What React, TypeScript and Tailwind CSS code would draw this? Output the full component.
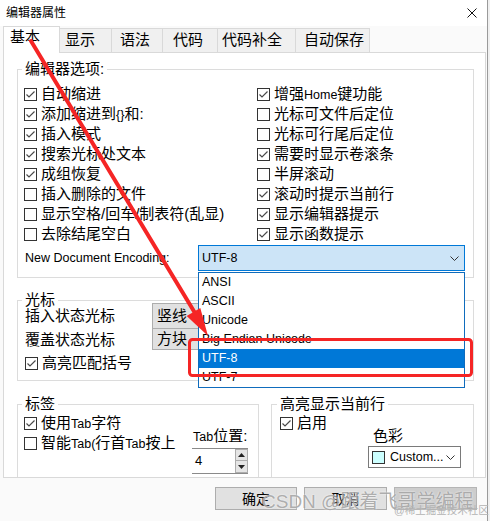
import React from "react";

type Kids = { children?: React.ReactNode };

// checkbox square, Win10 style
function Box({ on }: { on?: boolean }) {
  return (
    <span className="flex h-[13px] w-[13px] shrink-0 items-center justify-center border border-[#333333] bg-white">
      {on && (
        <svg width="11" height="11" viewBox="0 0 11 11">
          <polyline points="1.5,5.5 4,8 9.5,2.5" fill="none" stroke="#4a4a4a" strokeWidth="1.2" />
        </svg>
      )}
    </span>
  );
}

function Check({ on, children }: { on?: boolean } & Kids) {
  return (
    <div className="flex h-[20px] items-center whitespace-nowrap">
      <Box on={on} />
      <span className="ml-[4px] text-[15px] leading-[20px]">{children}</span>
    </div>
  );
}

function En({ children }: Kids) {
  return <span className="text-[12.5px]">{children}</span>;
}

function Group({ title, className, labelClass, children }: { title: string; className?: string; labelClass?: string } & Kids) {
  return (
    <div className={`border border-[#dcdcdc] ${className ?? ""}`}>
      <div className={`-mt-[9px] w-fit bg-white px-[3px] text-[15px] leading-[16px] ${labelClass ?? "ml-[4px]"}`}>{title}</div>
      {children}
    </div>
  );
}

function Chevron() {
  return (
    <svg width="9" height="5" viewBox="0 0 9 5">
      <polyline points="0.5,0.5 4.5,4.5 8.5,0.5" fill="none" stroke="#333" strokeWidth="1" />
    </svg>
  );
}

const leftOpts: [boolean, React.ReactNode][] = [
  [true, "自动缩进"],
  [true, <>添加缩进到<En>{"{}"}</En>和:</>],
  [true, "插入模式"],
  [true, "搜索光标处文本"],
  [true, "成组恢复"],
  [false, "插入删除的文件"],
  [false, "显示空格/回车/制表符(乱显)"],
  [false, "去除结尾空白"],
];

const rightOpts: [boolean, React.ReactNode][] = [
  [true, <>增强<En>Home</En>键功能</>],
  [false, "光标可文件后定位"],
  [false, "光标可行尾后定位"],
  [true, "需要时显示卷滚条"],
  [false, "半屏滚动"],
  [true, "滚动时提示当前行"],
  [true, "显示编辑器提示"],
  [true, "显示函数提示"],
];

const tabs: { label: string; cls: string }[] = [
  { label: "显示", cls: "w-[52px] pl-[5px]" },
  { label: "语法", cls: "w-[51px] pl-[8px]" },
  { label: "代码", cls: "w-[55px] pl-[10px]" },
  { label: "代码补全", cls: "w-[78px] pl-[4px]" },
  { label: "自动保存", cls: "w-[74px] pl-[8px]" },
];

const encodings = ["ANSI", "ASCII", "Unicode", "Big Endian Unicode", "UTF-8", "UTF-7"];

export default function App() {
  return (
    <div className="relative h-[521px] w-[490px] overflow-hidden bg-[#f0f0f0] font-['Liberation_Sans','Noto_Sans_CJK_SC',sans-serif] text-black">
      <div className="flex h-full w-[488px] flex-col border-r border-[#9a9a9a] bg-[#fafafa]">
        {/* 标题栏 */}
        <div className="flex h-[26px] items-center justify-between bg-white pl-[6px] pr-[10px]">
          <span className="text-[12px]">编辑器属性</span>
          <svg width="10" height="10" viewBox="0 0 10 10">
            <path d="M0.5 0.5 L9.5 9.5 M9.5 0.5 L0.5 9.5" stroke="#111" strokeWidth="1" />
          </svg>
        </div>

        {/* 页签 */}
        <div className="flex h-[26px] items-end pl-[3px]">
          <div className="relative z-10 -mb-px h-[27px] w-[57px] border-x border-t border-[#d9d9d9] bg-white pl-[6px] text-[15px] leading-[20px]">
            基本
          </div>
          {tabs.map((t) => (
            <div key={t.label} className={`h-[24px] border-r border-t border-[#d9d9d9] bg-[#f0f0f0] text-[15px] leading-[22px] ${t.cls}`}>
              {t.label}
            </div>
          ))}
        </div>

        {/* 页面 */}
        <div className="ml-[3px] h-[426px] w-[483px] overflow-hidden border border-[#d9d9d9] bg-white pl-[13px] pr-[11px]">
          <Group title="编辑器选项:" className="mt-[16px] pb-[6px]">
            <div className="flex pl-[6px] pt-[7px]">
              <div className="w-[233px]">
                {leftOpts.map(([on, label], i) => (
                  <Check key={i} on={on}>{label}</Check>
                ))}
              </div>
              <div>
                {rightOpts.map(([on, label], i) => (
                  <Check key={i} on={on}>{label}</Check>
                ))}
              </div>
            </div>
            <div className="mt-[1px] flex items-center pl-[6px]">
              <div className="w-[174px] pl-[1px] text-[12.5px]">New Document Encoding:</div>
              <div className="relative h-[26px] w-[267px]">
                <div className="flex h-full items-center justify-between border border-[#0078d7] bg-[#cce4f7] pl-[3px] pr-[5px] text-[12.5px]">
                  <span>UTF-8</span>
                  <Chevron />
                </div>
                {/* 下拉列表 */}
                <div className="absolute left-0 top-[27px] z-20 w-[267px] border border-[#0f6cbd] bg-white text-[12.5px]">
                  {encodings.map((e) => (
                    <div key={e} className={`h-[19px] pl-[3px] leading-[19px] ${e === "UTF-8" ? "bg-[#0078d7] text-white" : ""}`}>
                      {e}
                    </div>
                  ))}
                </div>
              </div>
            </div>
          </Group>

          <Group title="光标" className="mt-[22px] pb-[7px]">
            <div className="-mt-[5px] flex pl-[7px]">
              <div className="w-[127px] text-[15px]">
                <div className="h-[26px] leading-[26px]">插入状态光标</div>
                <div className="h-[22px] leading-[22px]">覆盖状态光标</div>
              </div>
              <div className="flex flex-col text-[15px]">
                <div className="h-[26px] w-[90px] border border-[#adadad] bg-[#e1e1e1] pl-[4px] leading-[24px]">竖线</div>
                <div className="-mt-px h-[22px] w-[90px] border border-[#adadad] bg-[#e1e1e1] pl-[4px] leading-[20px]">方块</div>
              </div>
            </div>
            <div className="mt-[2px] pl-[7px]">
              <Check on>高亮匹配括号</Check>
            </div>
          </Group>

          <div className="mt-[23px] flex gap-[12px]">
            <Group title="标签" className="w-[242px] pb-[4px]">
              <div className="flex pl-[6px]">
                <div className="w-[160px] pt-[1px]">
                  <Check on>使用<En>Tab</En>字符</Check>
                  <Check>智能<En>Tab(</En>行首<En>Tab</En>按上</Check>
                </div>
                <div className="ml-[8px]">
                  <div className="mt-[16px] pl-[1px] text-[15px] leading-[16px]">
                    <En>Tab</En>位置:
                  </div>
                  <div className="mt-[3px] flex h-[26px] w-[56px] border-y border-[#8a8a8a] bg-white">
                    <span className="flex-1 pl-[3px] text-[13px] leading-[24px]">4</span>
                    <div className="flex w-[13px] flex-col">
                      <div className="flex h-[12px] items-center justify-center border border-[#adadad] bg-[#e5e5e5]">
                        <svg width="7" height="4" viewBox="0 0 7 4"><polygon points="0,4 7,4 3.5,0" fill="#222" /></svg>
                      </div>
                      <div className="-mt-px flex h-[13px] items-center justify-center border border-[#adadad] bg-[#e5e5e5]">
                        <svg width="7" height="4" viewBox="0 0 7 4"><polygon points="0,0 7,0 3.5,4" fill="#222" /></svg>
                      </div>
                    </div>
                  </div>
                </div>
              </div>
            </Group>

            <Group title="高亮显示当前行" className="flex-1" labelClass="ml-[5px]">
              <div className="flex justify-between pl-[8px] pr-[12px]">
                <div className="pt-[1px]">
                  <Check on>启用</Check>
                </div>
                <div className="w-[93px]">
                  <div className="mt-[16px] pl-[5px] text-[15px] leading-[16px]">色彩</div>
                  <div className="mt-[2px] flex h-[22px] items-center border border-[#7a7a7a] bg-white pr-[5px]">
                    <span className="ml-[3px] h-[13px] w-[13px] border border-[#333] bg-[#ccffff]" />
                    <span className="ml-[5px] text-[12.5px]">Custom...</span>
                    <span className="ml-auto flex">
                      <Chevron />
                    </span>
                  </div>
                </div>
              </div>
            </Group>
          </div>
        </div>

        {/* 按钮 */}
        <div className="flex justify-end gap-[7px] pr-[10px] pt-[9px]">
          <button className="h-[23px] w-[82px] border border-[#adadad] bg-[#e1e1e1] text-[14px] leading-[20px]">确定</button>
          <button className="h-[23px] w-[83px] border border-[#adadad] bg-[#e1e1e1] text-[14px] leading-[20px]">取消</button>
          <button className="h-[23px] w-[83px] border border-[#b5b5b5] bg-[#cdcdcd] text-[14px] leading-[20px]" />
        </div>
      </div>

      {/* 水印 */}
      <div className="pointer-events-none absolute left-[262px] top-[490px] whitespace-nowrap text-[19px] leading-[24px] text-[#9a9a9a]/80 [text-shadow:0_0_2px_#fff]">
        CSDN @跟着飞哥学编程
      </div>
      <div className="pointer-events-none absolute left-[394px] top-[504px] whitespace-nowrap text-[10.5px] leading-[13px] text-[#b4b4b4]">
        @稀土掘金技术社区
      </div>

      {/* 红色标注 */}
      <svg className="pointer-events-none absolute left-0 top-0 z-30" width="490" height="521">
        <line x1="31" y1="41" x2="198" y2="318" stroke="#f52525" strokeWidth="4" strokeLinecap="round" />
        <polygon points="208,336 200.3,307.9 186.7,316.1" fill="#f52525" />
        <rect x="189.5" y="339.5" width="282" height="36" rx="3" fill="none" stroke="#f52525" strokeWidth="3" />
      </svg>
    </div>
  );
}
